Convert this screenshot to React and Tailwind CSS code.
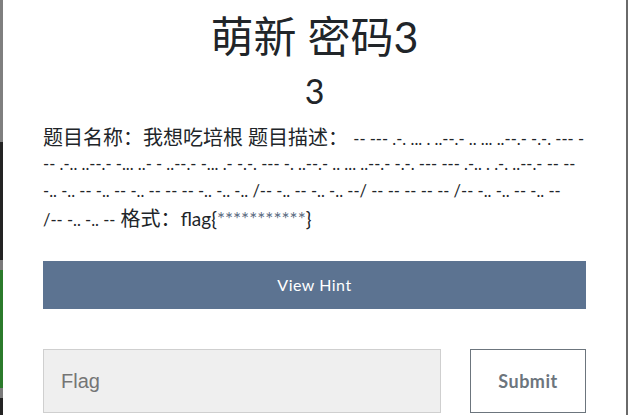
import React from 'react'

const lines = [
  '-- --- .-. ... . ..--.- .. ... ..--.- -.-. --- -',
  '-- .-.. ..--.- -... ..- - ..--.- -... .- -.-. --- -. ..--.- .. ... ..--.- -.-. --- --- .-.. . .-. ..--.- -- --',
  '-.. -.. -- -.. -- -.. -- -- -- -.. -.. -.. /-- -.. -- -.. -.. --/ -- -- -- -- -- /-- -.. -.. -- -.. --',
  '/-- -.. -.. --',
]

function BackdropStrip() {
  return (
    <div className="flex w-[3px] shrink-0 flex-col">
      <div className="h-[142px] bg-[#7f7f7f]" />
      <div className="h-[118px] bg-[#232323]" />
      <div className="h-[10px] bg-[#7a7a7a]" />
      <div className="h-[118px] bg-[#2b7a2b]" />
      <div className="h-[10px] bg-[#7a7a7a]" />
      <div className="flex-1 bg-[#232323]" />
    </div>
  )
}

export default function App() {
  return (
    <div className="flex h-[415px] w-[628px] overflow-hidden bg-white">
      <BackdropStrip />
      <div className="flex-1 border-r-2 border-[#6a6a6a] bg-white px-10 pt-[10px] font-['Lato','Noto_Sans_CJK_SC',sans-serif] text-[#212529]">
        <h2 className="text-center text-[43px] leading-[54px] font-normal">
          萌新 密码3
        </h2>
        <h3 className="mt-[8px] text-center text-[34px] leading-[38px] font-normal">3</h3>
        <div className="mt-[14px] text-[20px] leading-[27px] whitespace-nowrap">
          <div className="h-[27px]">
            题目名称：我想吃培根 题目描述：&nbsp;<span className="text-[16.5px]">{lines[0]}</span>
          </div>
          <div className="h-[27px] text-[16.5px]">{lines[1]}</div>
          <div className="h-[27px] text-[16.5px]">{lines[2]}</div>
          <div className="h-[27px]">
            <span className="text-[16.5px]">{lines[3]}</span> 格式：<span className="text-[19px]">flag{'{'}<span className="text-[#5a6a80]">***********</span>{'}'}</span>
          </div>
        </div>
        <button className="mt-[29px] h-[48px] w-full bg-[#5c7391] text-[16px] tracking-[0.5px] text-white">
          View Hint
        </button>
        <div className="mt-[40px] flex gap-[29px]">
          <input
            placeholder="Flag"
            className="h-[64px] w-[398px] border border-[#cfcfcf] bg-[#efefef] px-[17px] font-['Liberation_Sans',sans-serif] text-[20px] text-[#333] placeholder:text-[#757575] outline-none"
          />
          <button className="h-[64px] flex-1 border border-[#6c757d] bg-white text-[18px] font-bold tracking-[0.5px] text-[#6c757d]">
            Submit
          </button>
        </div>
      </div>
    </div>
  )
}
